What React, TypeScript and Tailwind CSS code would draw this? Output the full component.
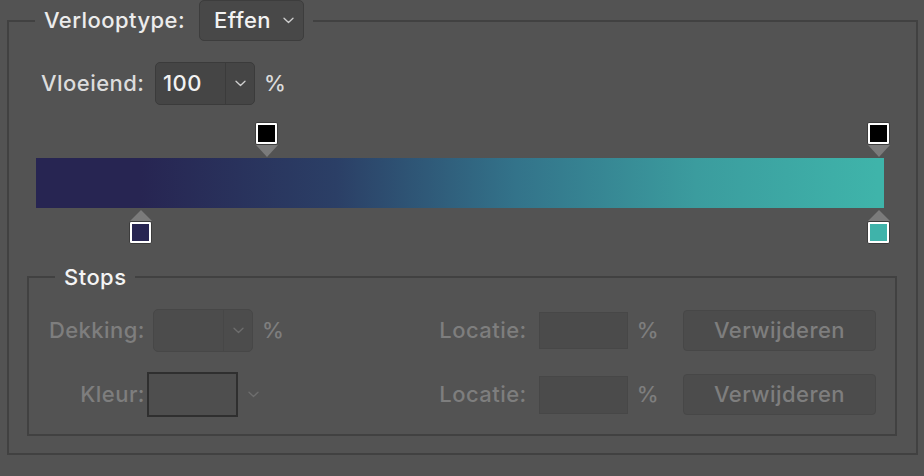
import React from "react";

function Chevron({ color = "#d0d0d0" }: { color?: string }) {
  return (
    <svg width="11" height="7" viewBox="0 0 11 7" fill="none">
      <path d="M1 1.2l4.5 4.3L10 1.2" stroke={color} strokeWidth="1.3" strokeLinecap="round" strokeLinejoin="round" />
    </svg>
  );
}

type Stop = { pos: number; color: string; top: boolean };

const stops: Stop[] = [
  { pos: 230, color: "#000000", top: true },
  { pos: 842, color: "#000000", top: true },
  { pos: 104, color: "#272552", top: false },
  { pos: 842, color: "#3fb3aa", top: false },
];

function StopMarker({ stop }: { stop: Stop }) {
  const square = (
    <div className="w-[23px] h-[23px] border border-[#3c3c3c] bg-white p-[2px] rounded-[2px]">
      <div className="w-full h-full" style={{ background: stop.color }} />
    </div>
  );
  const tri = stop.top ? (
    <div className="w-0 h-0 border-l-[11px] border-r-[11px] border-t-[12px] border-l-transparent border-r-transparent border-t-[#7b7b7b]" />
  ) : (
    <div className="w-0 h-0 border-l-[11px] border-r-[11px] border-b-[11px] border-l-transparent border-r-transparent border-b-[#7b7b7b]" />
  );
  return (
    <div
      className={`absolute flex flex-col items-center ${stop.top ? "top-0" : "bottom-0"}`}
      style={{ left: stop.pos - 11 }}
    >
      {stop.top ? (
        <>
          {square}
          {tri}
        </>
      ) : (
        <>
          {tri}
          {square}
        </>
      )}
    </div>
  );
}

const label = "text-[22px] font-medium tracking-[0.45px]";

export default function App() {
  return (
    <div
      className="w-[924px] h-[476px] bg-[#535353] pl-[7px] overflow-hidden"
      style={{ fontFamily: "Inter, 'Liberation Sans', sans-serif" }}
    >
      <fieldset className="w-[911px] h-[455px] border-2 border-[#414141] px-0 pb-0 m-0">
        <legend className="ml-[26px] px-[9px]">
          <div className="flex items-center gap-[14px] h-[41px]">
            <span className={`${label} text-[#ececec]`}>Verlooptype:</span>
            <div className="flex items-center gap-[12px] h-[41px] w-[105px] pl-[14px] rounded-[5px] bg-[#484848] border border-[#3d3d3d]">
              <span className={`${label} text-[#f2f2f2]`}>Effen</span>
              <Chevron />
            </div>
          </div>
        </legend>

        {/* Vloeiend */}
        <div className="flex items-center mt-[21px] pl-[32px] h-[43px]">
          <span className={`${label} text-[#dcdcdc] w-[114px]`}>Vloeiend:</span>
          <div className="flex h-[43px] w-[100px] rounded-[5px] bg-[#454545] border border-[#3b3b3b]">
            <div className={`flex items-center w-[70px] pl-[7px] border-r border-[#3b3b3b] ${label} text-[#f2f2f2]`}>100</div>
            <div className="flex-1 flex items-center justify-center">
              <Chevron />
            </div>
          </div>
          <span className={`ml-[9px] ${label} text-[#dcdcdc]`}>%</span>
        </div>

        {/* Gradient */}
        <div className="relative ml-[27px] mt-[17px] w-[848px] h-[122px]">
          <div
            className="absolute left-0 top-[36px] w-[848px] h-[50px]"
            style={{ background: "linear-gradient(to right, #272552 0px, #272552 104px, #2b3f66 300px, #33738a 480px, #3b9c9e 660px, #3fb4aa 842px)" }}
          />
          {stops.map((s, i) => (
            <StopMarker key={i} stop={s} />
          ))}
        </div>

        {/* Stops */}
        <fieldset className="ml-[18px] mt-[19px] w-[870px] h-[173px] border-2 border-[#414141] px-0 m-0">
          <legend className={`ml-[26px] px-[9px] ${label} text-[#f4f4f4] h-[28px] leading-[28px]`}>Stops</legend>

          <div className="flex items-center mt-[18px] h-[43px]">
            <div className="flex items-center">
              <span className={`w-[124px] text-right pr-[8px] ${label} text-[#7e7e7e]`}>Dekking:</span>
              <div className="flex h-[43px] w-[100px] rounded-[5px] bg-[#4c4c4c] border border-[#474747]">
                <div className="w-[70px] border-r border-[#474747]" />
                <div className="flex-1 flex items-center justify-center">
                  <Chevron color="#6e6e6e" />
                </div>
              </div>
              <span className={`ml-[9px] ${label} text-[#7e7e7e]`}>%</span>
            </div>
            <div className="flex items-center ml-auto mr-[19px]">
              <span className={`${label} text-[#7e7e7e] mr-[12px]`}>Locatie:</span>
              <div className="w-[89px] h-[37px] bg-[#4b4b4b] border border-[#474747]" />
              <span className={`ml-[9px] ${label} text-[#7e7e7e]`}>%</span>
              <div className={`ml-[24px] w-[193px] h-[41px] rounded-[4px] bg-[#4c4c4c] border border-[#474747] flex items-center justify-center ${label} text-[#7e7e7e]`}>
                Verwijderen
              </div>
            </div>
          </div>

          <div className="flex items-center mt-[20px] h-[45px]">
            <div className="flex items-center">
              <span className={`w-[118px] text-right pr-[2px] ${label} text-[#7e7e7e]`}>Kleur:</span>
              <div className="w-[91px] h-[45px] border-2 border-[#2f2f2f] bg-[#4e4e4e]" />
              <div className="ml-[10px]">
                <Chevron color="#6e6e6e" />
              </div>
            </div>
            <div className="flex items-center ml-auto mr-[19px]">
              <span className={`${label} text-[#7e7e7e] mr-[12px]`}>Locatie:</span>
              <div className="w-[89px] h-[38px] bg-[#4b4b4b] border border-[#474747]" />
              <span className={`ml-[9px] ${label} text-[#7e7e7e]`}>%</span>
              <div className={`ml-[24px] w-[193px] h-[41px] rounded-[4px] bg-[#4c4c4c] border border-[#474747] flex items-center justify-center ${label} text-[#7e7e7e]`}>
                Verwijderen
              </div>
            </div>
          </div>
        </fieldset>
      </fieldset>
    </div>
  );
}
